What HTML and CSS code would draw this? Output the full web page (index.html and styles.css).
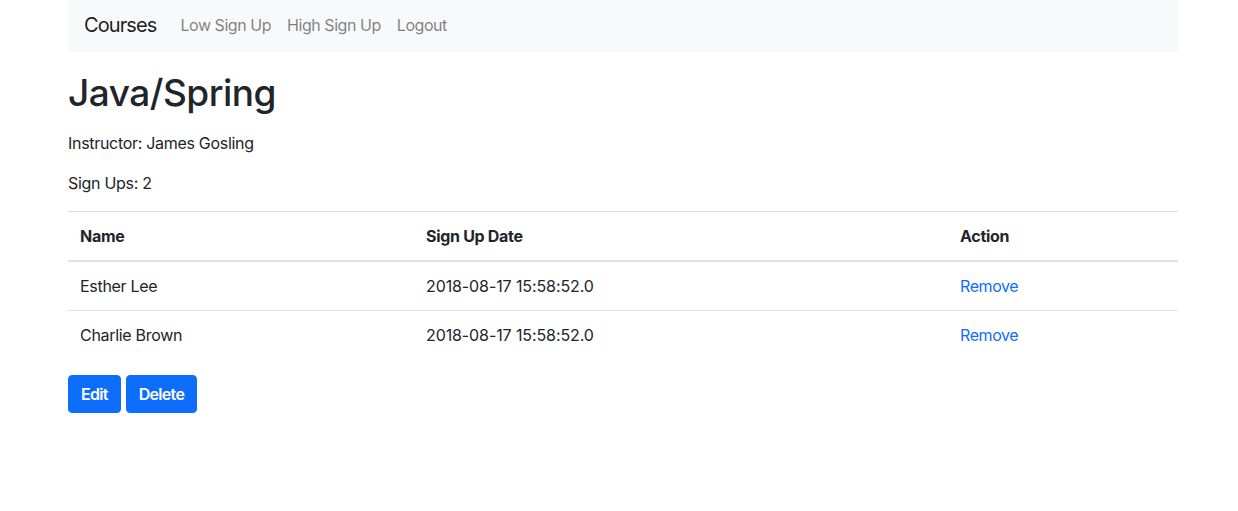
FILE: index.html
```html
<!DOCTYPE html>
<html lang="en">
<head>
<meta charset="utf-8">
<title>Java/Spring</title>
<link rel="stylesheet" href="styles.css">
</head>
<body>
<div class="container">
  <nav class="navbar">
    <a class="brand" href="#">Courses</a>
    <ul class="nav">
      <li><a class="nav-link" href="#">Low Sign Up</a></li>
      <li><a class="nav-link" href="#">High Sign Up</a></li>
      <li><a class="nav-link" href="#">Logout</a></li>
    </ul>
  </nav>
  <h1 class="title">Java/Spring</h1>
  <p class="info">Instructor: James Gosling</p>
  <p class="info">Sign Ups: 2</p>
  <table class="table">
    <thead>
      <tr>
        <th class="col-name">Name</th>
        <th class="col-date">Sign Up Date</th>
        <th class="col-action">Action</th>
      </tr>
    </thead>
    <tbody>
      <tr>
        <td>Esther Lee</td>
        <td class="date">2018-08-17 15:58:52.0</td>
        <td><a class="link" href="#">Remove</a></td>
      </tr>
      <tr>
        <td>Charlie Brown</td>
        <td class="date">2018-08-17 15:58:52.0</td>
        <td><a class="link" href="#">Remove</a></td>
      </tr>
    </tbody>
  </table>
  <div class="actions">
    <a class="btn" href="#">Edit</a>
    <a class="btn" href="#">Delete</a>
  </div>
</div>
</body>
</html>
```
FILE: styles.css
```css
* { box-sizing: border-box; }
html, body { margin: 0; padding: 0; background: #fff; }
body {
  font-family: "Inter", "Roboto", "Liberation Sans", sans-serif;
  font-size: 16px;
  line-height: 1.5;
  letter-spacing: -0.3px;
  color: #212529;
}
.container {
  width: 1110px;
  margin-left: 68px;
}
.navbar {
  display: flex;
  align-items: center;
  height: 52px;
  padding: 0 16px;
  background: #f8f9fa;
}
.brand {
  font-size: 20px;
  line-height: 30px;
  letter-spacing: -0.9px;
  color: rgba(0,0,0,0.9);
  text-decoration: none;
  margin-right: 16px;
  position: relative;
  top: -1px;
}
.nav {
  display: flex;
  list-style: none;
  margin: 0;
  padding: 0;
}
.nav-link {
  display: block;
  padding: 8px;
  letter-spacing: -0.45px;
  color: rgba(0,0,0,0.5);
  text-decoration: none;
  position: relative;
  top: -1px;
}
.title {
  font-size: 37px;
  font-weight: 500;
  line-height: 48px;
  letter-spacing: -0.5px;
  margin: 17px 0 14px;
}
.info {
  margin: 0 0 16px;
}
.table {
  width: 100%;
  border-collapse: collapse;
  margin-bottom: 16px;
}
.table th, .table td {
  padding: 12px;
  text-align: left;
  vertical-align: top;
  border-top: 1px solid #dee2e6;
}
.table th { font-weight: 700; }
.table thead th { border-bottom: 2px solid #dee2e6; }
.col-name { width: 346px; }
.col-date { width: 534px; }
.col-action { width: 230px; }
.date { letter-spacing: -0.1px; }
.link {
  color: #0d6efd;
  letter-spacing: -0.4px;
  text-decoration: none;
}
.actions {
  display: flex;
  gap: 5px;
}
.btn {
  display: inline-block;
  padding: 6px 12px;
  font-weight: 600;
  line-height: 24px;
  letter-spacing: -0.7px;
  color: #fff;
  background: #0d6efd;
  border: 1px solid #0d6efd;
  border-radius: 4px;
  text-decoration: none;
}
```
